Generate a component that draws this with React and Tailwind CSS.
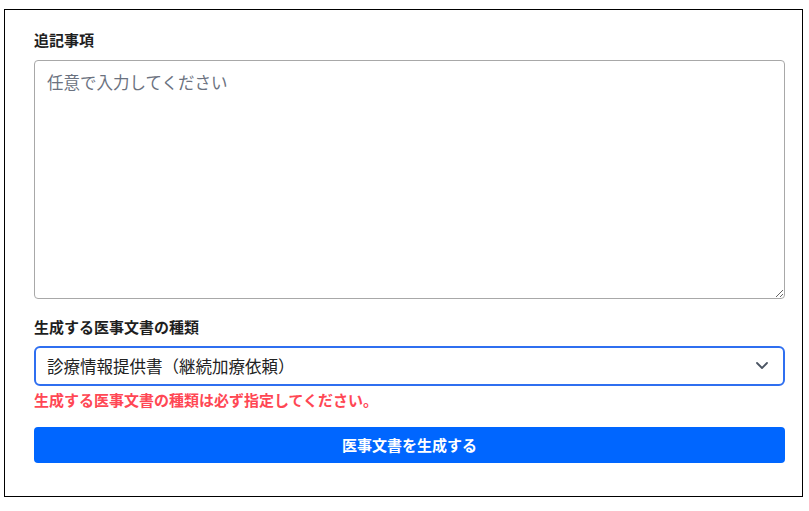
import React, { useState } from "react";

const font = "font-['Noto_Sans_CJK_JP',sans-serif]";

export default function App() {
  const [note, setNote] = useState("");
  const [docType, setDocType] = useState("referral");

  return (
    <div className={`w-[809px] h-[511px] bg-white pt-[9px] pl-[4px] ${font}`}>
      {/* Form card */}
      <div className="w-[799px] h-[488px] border border-black pl-[29px] pr-[16px] pt-[20px]">
        <label className="block text-[15px] leading-[20px] font-bold text-[#1f1f1f]">追記事項</label>
        <textarea
          value={note}
          onChange={(e) => setNote(e.target.value)}
          placeholder="任意で入力してください"
          className="mt-[10px] block w-[751px] h-[239px] rounded-[4px] border border-[#a8a8a8] px-[12px] py-[9px] text-[16.5px] leading-[24px] text-[#222] placeholder:text-[#6b7280] outline-none"
        />

        <label className="mt-[18px] block text-[15px] leading-[20px] font-bold text-[#1f1f1f]">
          生成する医事文書の種類
        </label>

        <div className="relative mt-[9px] w-[751px]">
          <select
            value={docType}
            onChange={(e) => setDocType(e.target.value)}
            className="block w-full h-[40px] appearance-none rounded-[6px] border-2 border-[#2f6ff0] bg-white pl-[11px] pr-[40px] text-[16.5px] text-[#222] outline-none"
          >
            <option value="referral">診療情報提供書（継続加療依頼）</option>
            <option value="summary">退院時サマリー</option>
          </select>
          <svg
            className="pointer-events-none absolute right-[16px] top-[14px]"
            width="14"
            height="10"
            viewBox="0 0 14 10"
            fill="none"
            stroke="#4b5563"
            strokeWidth="1.8"
            strokeLinecap="round"
            strokeLinejoin="round"
          >
            <polyline points="2 3 7 8 12 3" />
          </svg>
        </div>

        <p className="mt-[3px] text-[15px] leading-[22px] font-bold text-[#ff4754]">
          生成する医事文書の種類は必ず指定してください。
        </p>

        <button className="mt-[16px] flex w-[751px] h-[36px] items-center justify-center rounded-[4px] bg-[#0066ff] text-[15px] font-bold text-white">
          医事文書を生成する
        </button>
      </div>
    </div>
  );
}
